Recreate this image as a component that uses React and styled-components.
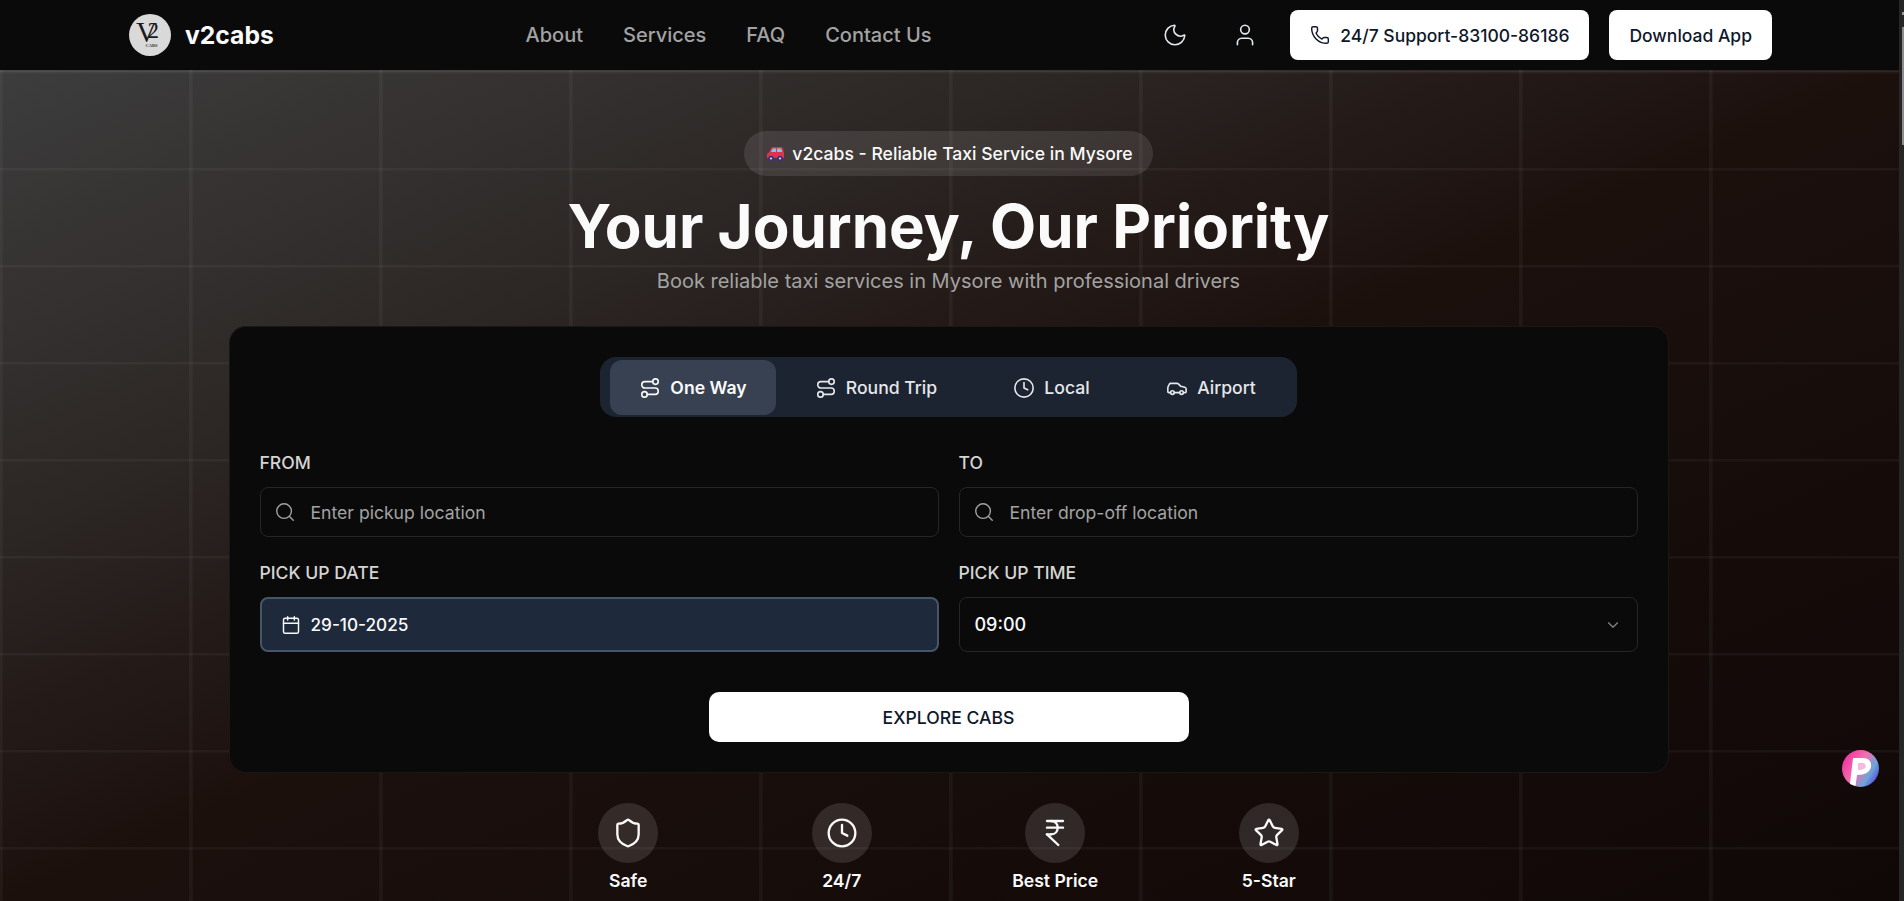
import React from "react";
import styled, { createGlobalStyle } from "styled-components";
import {
  Car,
  ChevronDown,
  Calendar,
  Clock,
  IndianRupee,
  Moon,
  Phone,
  Route,
  Search,
  Shield,
  Star,
  User,
} from "lucide-react";

const GlobalStyle = createGlobalStyle`
  html, body {
    margin: 0;
    height: 100%;
    overflow: hidden;
    background: #0a0a0a;
  }
  body {
    font-family: Inter, "Liberation Sans", sans-serif;
    color: #fafafa;
  }
  * { box-sizing: border-box; }
`;

const Page = styled.div`
  display: flex;
  height: 901px;
  overflow: hidden;
`;

const Main = styled.div`
  width: 1899px;
  flex: none;
`;

const Scrollbar = styled.div`
  flex: 1;
  padding: 12px 0 0 3px;
  background: #262626;
`;

const ScrollArrow = styled.div`
  width: 2px;
  height: 3px;
  margin-bottom: 12px;
  background: #9a9a9a;
`;

const ScrollThumb = styled.div`
  width: 2px;
  height: 118px;
  background: #8c8c8c;
`;

const Nav = styled.header`
  height: 70px;
  padding: 0 127px 0 129px;
  background: #0a0a0a;
  display: flex;
  align-items: center;
  justify-content: space-between;
`;

const Brand = styled.div`
  display: flex;
  align-items: center;
  gap: 14px;
`;

const BrandName = styled.span`
  font-size: 24.7px;
  font-weight: 700;
  color: #fafafa;
`;

const NavLinks = styled.nav`
  margin-left: 28px;
  display: flex;
  gap: 40px;
`;

const NavLink = styled.a`
  font-size: 20px;
  font-weight: 500;
  color: #a3a3a3;
`;

const NavActions = styled.div`
  display: flex;
  align-items: center;
`;

const IconButton = styled.button`
  width: 40px;
  height: 40px;
  margin-right: ${(p) => p.$gap}px;
  padding: 0;
  display: flex;
  align-items: center;
  justify-content: center;
  background: transparent;
  border: 0;
  color: #e2e8f0;
`;

const WhiteButton = styled.button`
  height: 50px;
  padding: 0 20px;
  margin-left: ${(p) => p.$gap || 0}px;
  display: flex;
  align-items: center;
  gap: 10px;
  background: #fff;
  border: 0;
  border-radius: 8px;
  color: #0f172a;
  font-family: inherit;
  font-size: 17.5px;
  font-weight: 500;
`;

const Hero = styled.main`
  height: 831px;
  padding: 59px 2px 0 0;
  border-top: 2px solid rgba(255, 255, 255, 0.06);
  display: flex;
  flex-direction: column;
  align-items: center;
  background-color: #1a0e0b;
  background-origin: border-box;
  background-image:
    linear-gradient(to right, rgba(255, 255, 255, 0.04) 1px, rgba(255, 255, 255, 0.04) 3px, transparent 4.5px),
    linear-gradient(to bottom, rgba(255, 255, 255, 0.04) 2px, transparent 3px),
    linear-gradient(to bottom right, #3d3d3d 0%, #2e2927 25%, #1c100d 50%, #150c0a 75%, #100807 100%);
  background-size: 190px 97px, 190px 97px, 100% 100%;
  background-position: -1px 1px, -1px 1px, 0 0;
`;

const Badge = styled.div`
  height: 45px;
  padding: 0 20px 0 22px;
  display: flex;
  align-items: center;
  gap: 7px;
  border-radius: 23px;
  background: rgba(255, 255, 255, 0.1);
  font-size: 17.6px;
  font-weight: 500;
  color: #fafafa;
`;

const Title = styled.h1`
  margin: 20px 0 0;
  font-size: 60px;
  line-height: 60px;
  font-weight: 700;
  color: #fafafa;
`;

const Subtitle = styled.p`
  margin: 11px 0 0;
  font-size: 20px;
  line-height: 28px;
  color: #a3a3a3;
`;

const Card = styled.section`
  width: 1438px;
  height: 445px;
  margin-top: 32px;
  padding: 30px 30px 0;
  background: #0a0a0a;
  border-radius: 16px;
  box-shadow: 0 0 0 1px #1a1717;
`;

const TabBar = styled.div`
  width: 697px;
  height: 60px;
  margin: 0 auto 34px;
  padding: 3px 2px 3px 10px;
  display: grid;
  grid-template-columns: 166px 200px 151px 168px;
  background: #1c2431;
  border-radius: 16px;
`;

const Tab = styled.button`
  height: 55px;
  padding: 0;
  display: flex;
  align-items: center;
  justify-content: center;
  gap: 9px;
  background: ${(p) => (p.$active ? "#374151" : "transparent")};
  border: 0;
  border-radius: 12px;
  color: ${(p) => (p.$active ? "#fafafa" : "#e5e7eb")};
  font-family: inherit;
  font-size: 17.6px;
  font-weight: ${(p) => (p.$active ? 600 : 500)};
`;

const FormGrid = styled.div`
  display: grid;
  grid-template-columns: 1fr 1fr;
  column-gap: 20px;
  row-gap: 24px;
`;

const Field = styled.div`
  display: flex;
  flex-direction: column;
  gap: 12px;
`;

const Label = styled.label`
  font-size: 17.6px;
  line-height: 24px;
  font-weight: 500;
  color: #d4d4d4;
`;

const InputBox = styled.div`
  height: 50px;
  padding: 0 13px;
  display: flex;
  align-items: center;
  gap: 15px;
  border: 1px solid #262626;
  border-radius: 8px;
  color: #a3a3a3;
`;

const TextInput = styled.input`
  flex: 1;
  padding: 1px 0 0;
  background: transparent;
  border: 0;
  outline: 0;
  font-family: inherit;
  font-size: 17.6px;
  color: #fafafa;
  &::placeholder { color: #a3a3a3; }
`;

const DateBox = styled.div`
  height: 55px;
  padding: 0 19px;
  display: flex;
  align-items: center;
  gap: 10px;
  background: #1e293b;
  border: 2px solid #475569;
  border-radius: 8px;
  font-size: 17.2px;
  font-weight: 500;
  color: #fafafa;
`;

const SelectBox = styled.div`
  height: 55px;
  padding: 0 15px;
  display: flex;
  align-items: center;
  justify-content: space-between;
  border: 1px solid #262626;
  border-radius: 8px;
  font-size: 18px;
  font-weight: 500;
  color: #fafafa;
  svg { color: #8a8a8a; }
`;

const SubmitRow = styled.div`
  margin-top: 40px;
  display: flex;
  justify-content: center;
`;

const SubmitButton = styled.button`
  width: 480px;
  height: 50px;
  background: #fff;
  border: 0;
  border-radius: 10px;
  color: #0f172a;
  font-family: inherit;
  font-size: 17.6px;
  font-weight: 500;
`;

const Stats = styled.div`
  width: 854px;
  margin-top: 31px;
  display: grid;
  grid-template-columns: repeat(4, 1fr);
`;

const Stat = styled.div`
  display: flex;
  flex-direction: column;
  align-items: center;
  gap: 6px;
`;

const StatIcon = styled.div`
  width: 60px;
  height: 60px;
  display: flex;
  align-items: center;
  justify-content: center;
  border-radius: 50%;
  background: rgba(255, 255, 255, 0.12);
  color: #fafafa;
`;

const StatLabel = styled.span`
  font-size: 17.6px;
  line-height: 24px;
  font-weight: 600;
  color: #fafafa;
`;

const FloatBadge = styled.div`
  position: fixed;
  left: 1842px;
  top: 750px;
  width: 37px;
  height: 37px;
`;

const logoFont = '"Liberation Serif", serif';

function Logo() {
  return (
    <svg width="42" height="42" viewBox="0 0 42 42">
      <circle cx="21" cy="21" r="21" fill="#d9d9d9" />
      <text x="7" y="28" fontFamily={logoFont} fontSize="29" fill="#1a1a1a">V</text>
      <text x="18.5" y="24" fontFamily={logoFont} fontSize="23" fill="#1a1a1a">2</text>
      <text x="16.5" y="32.5" fontFamily={logoFont} fontSize="4.5" fontWeight="700" fill="#333">CABS</text>
    </svg>
  );
}

function CarEmoji() {
  return (
    <svg width="19" height="16" viewBox="0 0 19 16">
      <path d="M5 2.5 C5.5 1.5 6.5 1 7.5 1 H15 C16 1 16.5 1.5 17 2.5 L18 7 V12 H1 V8.5 C1 7.5 1.8 7 3 6.5 Z" fill="#e0324a" />
      <path d="M6.6 2.6 H10 V6 H4.8 Z M11 2.6 H15.2 L16.2 6 H11 Z" fill="#7cc4ee" />
      <circle cx="5" cy="12.5" r="2.8" fill="#4a2a7a" />
      <circle cx="14" cy="12.5" r="2.8" fill="#4a2a7a" />
      <circle cx="5" cy="12.5" r="1.1" fill="#d8d8e8" />
      <circle cx="14" cy="12.5" r="1.1" fill="#d8d8e8" />
    </svg>
  );
}

function FloatLogo() {
  return (
    <svg width="37" height="37" viewBox="0 0 37 37">
      <defs>
        <linearGradient id="floatGrad" x1="0" y1="0.2" x2="1" y2="0.8">
          <stop offset="0" stopColor="#f02fa0" />
          <stop offset="0.45" stopColor="#f56fb0" />
          <stop offset="0.75" stopColor="#6aa6d8" />
          <stop offset="1" stopColor="#5a3ee0" />
        </linearGradient>
      </defs>
      <circle cx="18.5" cy="18.5" r="18.5" fill="url(#floatGrad)" />
      <path d="M11 8 H21 C27 8 30 12 29 17 C28 22 23 25 15 25 L13.5 36 L8 34 Z" fill="#fff" />
      <path d="M16 13 H20.5 C23 13 24 15 23.5 17 C23 19 20 20 16 20 Z" fill="#f6b8dc" />
    </svg>
  );
}

const TABS = [
  { label: "One Way", Icon: Route, active: true },
  { label: "Round Trip", Icon: Route },
  { label: "Local", Icon: Clock },
  { label: "Airport", Icon: Car },
];

const STATS = [
  { label: "Safe", Icon: Shield },
  { label: "24/7", Icon: Clock },
  { label: "Best Price", Icon: IndianRupee },
  { label: "5-Star", Icon: Star },
];

export default function App() {
  return (
    <>
      <GlobalStyle />
      <Page>
        <Main>
          <Nav>
            <Brand>
              <Logo />
              <BrandName>v2cabs</BrandName>
            </Brand>
            <NavLinks>
              <NavLink>About</NavLink>
              <NavLink>Services</NavLink>
              <NavLink>FAQ</NavLink>
              <NavLink>Contact Us</NavLink>
            </NavLinks>
            <NavActions>
              <IconButton $gap={30}>
                <Moon size={26} strokeWidth={1.5} />
              </IconButton>
              <IconButton $gap={25}>
                <User size={26} strokeWidth={1.5} />
              </IconButton>
              <WhiteButton>
                <Phone size={20} strokeWidth={1.75} />
                24/7 Support-83100-86186
              </WhiteButton>
              <WhiteButton $gap={20}>Download App</WhiteButton>
            </NavActions>
          </Nav>
          <Hero>
            <Badge>
              <CarEmoji />
              v2cabs - Reliable Taxi Service in Mysore
            </Badge>
            <Title>Your Journey, Our Priority</Title>
            <Subtitle>Book reliable taxi services in Mysore with professional drivers</Subtitle>
            <Card>
              <TabBar>
                {TABS.map(({ label, Icon, active }) => (
                  <Tab key={label} $active={active}>
                    <Icon size={22} strokeWidth={1.75} />
                    {label}
                  </Tab>
                ))}
              </TabBar>
              <FormGrid>
                <Field>
                  <Label>FROM</Label>
                  <InputBox>
                    <Search size={22} strokeWidth={1.5} />
                    <TextInput placeholder="Enter pickup location" />
                  </InputBox>
                </Field>
                <Field>
                  <Label>TO</Label>
                  <InputBox>
                    <Search size={22} strokeWidth={1.5} />
                    <TextInput placeholder="Enter drop-off location" />
                  </InputBox>
                </Field>
                <Field>
                  <Label>PICK UP DATE</Label>
                  <DateBox>
                    <Calendar size={20} strokeWidth={1.75} />
                    29-10-2025
                  </DateBox>
                </Field>
                <Field>
                  <Label>PICK UP TIME</Label>
                  <SelectBox>
                    09:00
                    <ChevronDown size={18} strokeWidth={1.5} />
                  </SelectBox>
                </Field>
              </FormGrid>
              <SubmitRow>
                <SubmitButton>EXPLORE CABS</SubmitButton>
              </SubmitRow>
            </Card>
            <Stats>
              {STATS.map(({ label, Icon }) => (
                <Stat key={label}>
                  <StatIcon>
                    <Icon size={32} strokeWidth={1.75} />
                  </StatIcon>
                  <StatLabel>{label}</StatLabel>
                </Stat>
              ))}
            </Stats>
          </Hero>
        </Main>
        <Scrollbar>
          <ScrollArrow />
          <ScrollThumb />
        </Scrollbar>
        <FloatBadge>
          <FloatLogo />
        </FloatBadge>
      </Page>
    </>
  );
}
